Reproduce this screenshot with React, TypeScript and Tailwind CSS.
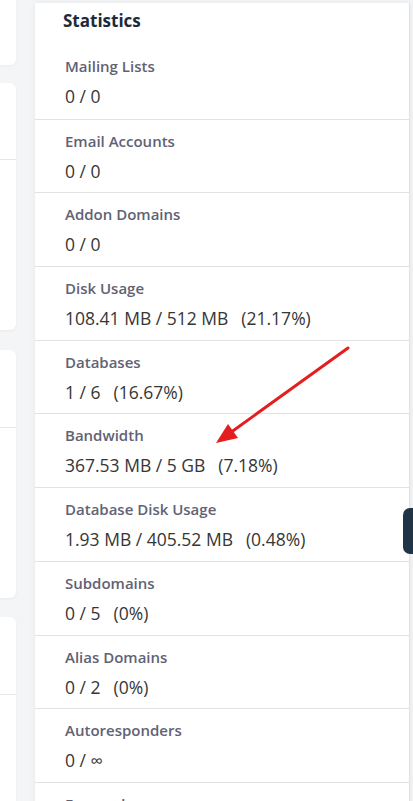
import React from "react";

const rows: { label: string; value: string; pct?: string }[] = [
  { label: "Mailing Lists", value: "0 / 0" },
  { label: "Email Accounts", value: "0 / 0" },
  { label: "Addon Domains", value: "0 / 0" },
  { label: "Disk Usage", value: "108.41 MB / 512 MB", pct: "(21.17%)" },
  { label: "Databases", value: "1 / 6", pct: "(16.67%)" },
  { label: "Bandwidth", value: "367.53 MB / 5 GB", pct: "(7.18%)" },
  { label: "Database Disk Usage", value: "1.93 MB / 405.52 MB", pct: "(0.48%)" },
  { label: "Subdomains", value: "0 / 5", pct: "(0%)" },
  { label: "Alias Domains", value: "0 / 2", pct: "(0%)" },
  { label: "Autoresponders", value: "0 / ∞" },
  { label: "Forwarders", value: "0 / 0" },
];

export default function App() {
  return (
    <div
      className="relative h-[801px] w-[413px] overflow-hidden bg-[#f4f5f7] flex items-start"
      style={{ fontFamily: '"Open Sans", "Noto Sans", sans-serif' }}
    >
      {/* left column cards */}
      <div className="w-[16px] flex flex-col shrink-0">
        <div className="h-[65px] shrink-0 bg-white rounded-br-[6px] shadow-[0_1px_3px_rgba(0,0,0,0.04)]" />
        <div className="mt-[18px] h-[247px] shrink-0 bg-white rounded-r-[6px] shadow-[0_1px_3px_rgba(0,0,0,0.05)] flex flex-col">
          <div className="h-[77px] shrink-0 border-b border-[#e6e6e6]" />
        </div>
        <div className="mt-[20px] h-[248px] shrink-0 bg-white rounded-r-[6px] shadow-[0_1px_3px_rgba(0,0,0,0.05)] flex flex-col">
          <div className="h-[78px] shrink-0 border-b border-[#e6e6e6]" />
        </div>
        <div className="mt-[19px] h-[300px] shrink-0 bg-white rounded-tr-[6px] shadow-[0_1px_3px_rgba(0,0,0,0.05)] flex flex-col">
          <div className="h-[78px] shrink-0 border-b border-[#e6e6e6]" />
        </div>
      </div>

      {/* main statistics card */}
      <div className="ml-[19px] mt-[3px] w-[375px] shrink-0 bg-white shadow-[0_0_6px_rgba(0,0,0,0.07)] border-r border-[#e2e2e2] flex flex-col">
        <div className="h-[42px] shrink-0 pl-[28px] pt-[6px]">
          <h2 className="text-[17px] leading-[24px] font-bold text-[#1c2a3a]">Statistics</h2>
        </div>
        {rows.map((r, i) => (
          <div
            key={r.label}
            className={
              "h-[73.7px] shrink-0 pl-[30px] pt-[11px] " +
              (i === 0 ? "" : "border-t border-[#e2e2e2]")
            }
          >
            <div className="text-[15px] leading-[20px] font-semibold text-[#616274]">{r.label}</div>
            <div className="mt-[8px] text-[17.5px] leading-[24px] text-[#363636] whitespace-nowrap">
              {r.value}
              {r.pct && <span className="ml-[13px]">{r.pct}</span>}
            </div>
          </div>
        ))}
      </div>

      {/* red annotation arrow */}
      <svg
        className="absolute left-0 top-0 pointer-events-none"
        width="413"
        height="801"
        viewBox="0 0 413 801"
      >
        <line x1="348" y1="348" x2="230" y2="433" stroke="#e41e1e" strokeWidth="3" strokeLinecap="round" />
        <polygon points="216,443 228,424 238,438" fill="#e41e1e" />
      </svg>

      {/* dark floating button edge */}
      <div className="absolute left-[403px] top-[508px] w-[30px] h-[46px] rounded-[7px] bg-[#1f3447]" />
    </div>
  );
}
